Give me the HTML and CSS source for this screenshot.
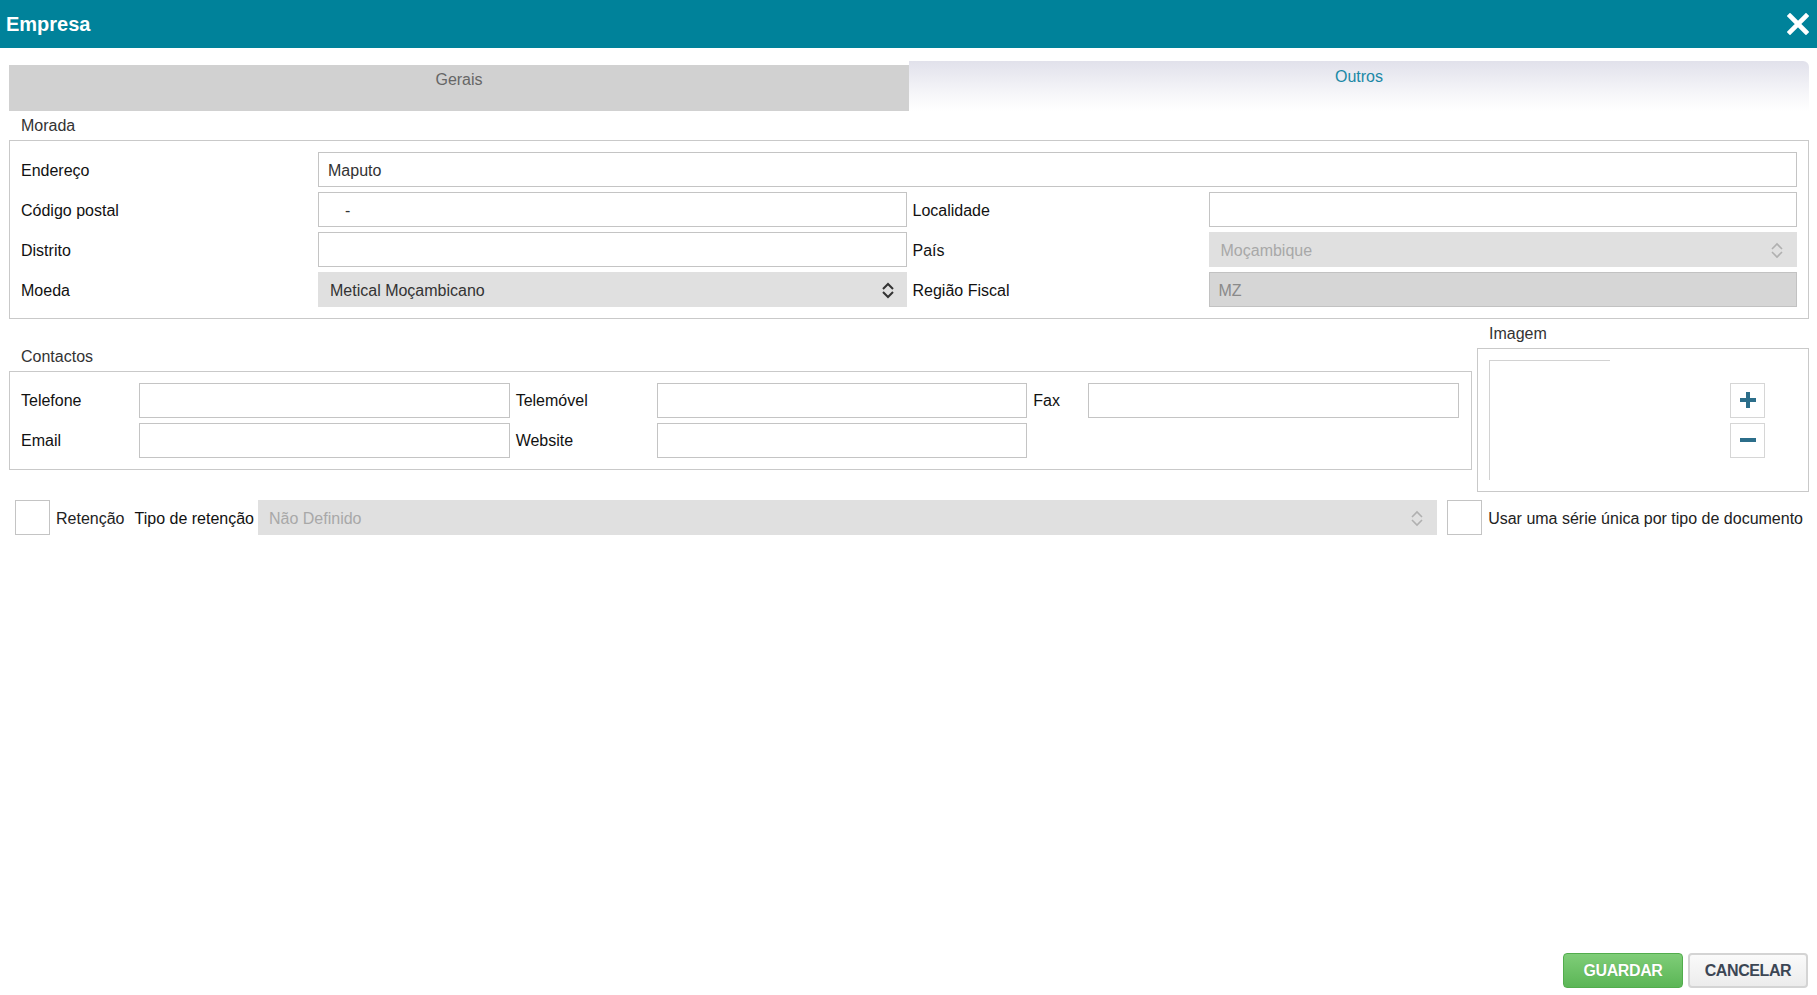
FILE: index.html
```html
<!DOCTYPE html>
<html lang="pt">
<head>
  <meta charset="UTF-8">
  <title>Empresa</title>
  <link rel="stylesheet" href="styles.css">
</head>
<body>
  <div class="dialog">
    <header class="titlebar">
      <h1>Empresa</h1>
      <button class="close" title="Fechar">
        <svg width="22" height="22" viewBox="0 0 22 22"><path d="M3 3 L19 19 M19 3 L3 19" stroke="#fff" stroke-width="4.6" stroke-linecap="square"/></svg>
      </button>
    </header>

    <div class="content">
      <nav class="tabs">
        <div class="tab">Gerais</div>
        <div class="tab active">Outros</div>
      </nav>

      <section class="group">
        <div class="group-title">Morada</div>
        <div class="box morada">
          <label>Endereço</label>
          <input class="wide" type="text" value="Maputo">

          <label>Código postal</label>
          <input class="postal" type="text" value="-">
          <label class="second">Localidade</label>
          <input type="text">

          <label>Distrito</label>
          <input type="text">
          <label class="second">País</label>
          <div class="select disabled">
            <span>Moçambique</span>
            <svg width="12" height="17" viewBox="0 0 12 17"><path d="M1 7 L6 2 L11 7 M1 10 L6 15 L11 10" fill="none" stroke="#b0b0b0" stroke-width="1.6"/></svg>
          </div>

          <label>Moeda</label>
          <div class="select">
            <span>Metical Moçambicano</span>
            <svg width="12" height="17" viewBox="0 0 12 17"><path d="M1 7 L6 2 L11 7 M1 10 L6 15 L11 10" fill="none" stroke="#333" stroke-width="2"/></svg>
          </div>
          <label class="second">Região Fiscal</label>
          <input class="readonly" type="text" value="MZ" readonly>
        </div>
      </section>

      <div class="split">
        <section class="group contactos">
          <div class="group-title">Contactos</div>
          <div class="box contact-grid">
            <label>Telefone</label>
            <input type="text">
            <label class="second">Telemóvel</label>
            <input type="text">
            <label class="second">Fax</label>
            <input type="text">

            <label>Email</label>
            <input type="text">
            <label class="second">Website</label>
            <input type="text">
          </div>
        </section>

        <section class="group imagem">
          <div class="group-title">Imagem</div>
          <div class="box image-box">
            <div class="preview"></div>
            <div class="image-actions">
              <button class="icon-btn" title="Adicionar">
                <svg width="18" height="18" viewBox="0 0 18 18"><path d="M9 1 V17 M1 9 H17" stroke="#2c6e8a" stroke-width="4"/></svg>
              </button>
              <button class="icon-btn" title="Remover">
                <svg width="18" height="18" viewBox="0 0 18 18"><path d="M1 9 H17" stroke="#2c6e8a" stroke-width="4"/></svg>
              </button>
            </div>
          </div>
        </section>
      </div>

      <div class="options">
        <span class="checkbox"></span>
        <span class="opt-label">Retenção</span>
        <span class="opt-label type">Tipo de retenção</span>
        <div class="select disabled grow">
          <span>Não Definido</span>
          <svg width="12" height="17" viewBox="0 0 12 17"><path d="M1 7 L6 2 L11 7 M1 10 L6 15 L11 10" fill="none" stroke="#b0b0b0" stroke-width="1.6"/></svg>
        </div>
        <span class="checkbox gap"></span>
        <span class="opt-label">Usar uma série única por tipo de documento</span>
      </div>
    </div>

    <footer class="footer">
      <button class="btn btn-save">GUARDAR</button>
      <button class="btn btn-cancel">CANCELAR</button>
    </footer>
  </div>
</body>
</html>
```

FILE: styles.css
```css
html, body {
  margin: 0;
  padding: 0;
  height: 100%;
  background: #fff;
  font-family: "Liberation Sans", Arial, sans-serif;
  font-size: 16px;
  color: #222;
}

.dialog {
  height: 100vh;
  display: flex;
  flex-direction: column;
}

.titlebar {
  height: 48px;
  background-color: #00829a;
  display: flex;
  align-items: center;
  justify-content: space-between;
  padding: 0 8px 0 6px;
  flex-shrink: 0;
}

.titlebar h1 {
  margin: 0;
  color: #fff;
  font-size: 20px;
  font-weight: bold;
}

.close {
  background: none;
  border: 0;
  padding: 0;
  width: 22px;
  height: 22px;
  cursor: pointer;
  display: flex;
}

.content {
  flex: 1;
  padding: 0 8px 0 9px;
}

/* tabs */
.tabs {
  display: flex;
  margin-top: 13px;
  height: 50px;
  align-items: flex-end;
}

.tab {
  flex: 1;
  text-align: center;
  box-sizing: border-box;
  line-height: 18px;
}

.tab:first-child {
  height: 46px;
  padding-top: 6px;
  background-color: #d1d1d1;
  color: #666;
}

.tab.active {
  height: 50px;
  padding-top: 7px;
  color: #1a88a6;
  background: linear-gradient(to bottom, #e1e1eb 0%, #f3f3f7 55%, #fff 100%);
  border-top-right-radius: 6px;
}

/* groups */
.group-title {
  height: 29px;
  line-height: 29px;
  padding-left: 12px;
  color: #333;
}

.box {
  border: 1px solid #c9c9c9;
}

label {
  color: #111;
  align-self: center;
  padding-top: 2px;
}

label.second {
  padding-left: 6px;
}

input[type="text"] {
  height: 35px;
  box-sizing: border-box;
  border: 1px solid #c4c4c4;
  padding: 2px 9px 0;
  font-family: inherit;
  font-size: 16px;
  color: #333;
  background: #fff;
  outline: none;
  margin: 0;
  width: 100%;
}

input.postal {
  padding-left: 26px;
}

input.readonly {
  background-color: #d6d6d6;
  border-color: #c2c2c2;
  color: #8a8a8a;
}

.select {
  height: 35px;
  box-sizing: border-box;
  background-color: #e0e0e0;
  display: flex;
  align-items: center;
  justify-content: space-between;
  padding: 2px 13px 0 12px;
  color: #333;
}

.select.disabled {
  color: #a8a8a8;
  padding-right: 14px;
}

.morada {
  display: grid;
  grid-template-columns: 297px 1fr 302px 1fr;
  row-gap: 5px;
  padding: 11px 11px;
}

.morada .wide {
  grid-column: 2 / 5;
}

.split {
  display: flex;
  align-items: center;
  gap: 5px;
}

.contactos {
  flex: 1;
}

.contact-grid {
  display: grid;
  grid-template-columns: 118px 1fr 147px 1fr 61px 1fr;
  row-gap: 5px;
  padding: 11px 12px 11px 11px;
}

.imagem {
  width: 332px;
}

.image-box {
  display: flex;
  align-items: center;
  padding: 11px;
}

.preview {
  width: 120px;
  height: 119px;
  border-top: 1px solid #d2d2d2;
  border-left: 1px solid #d2d2d2;
}

.image-actions {
  margin-left: auto;
  margin-right: 32px;
  display: flex;
  flex-direction: column;
  gap: 5px;
}

.icon-btn {
  width: 35px;
  height: 35px;
  box-sizing: border-box;
  border: 1px solid #d6d6d6;
  background: #fff;
  padding: 0;
  display: flex;
  align-items: center;
  justify-content: center;
}

/* options row */
.options {
  display: flex;
  align-items: center;
  margin-top: 8px;
  padding: 0 6px 0 6px;
}

.checkbox {
  width: 35px;
  height: 35px;
  box-sizing: border-box;
  border: 1px solid #c4c4c4;
  flex-shrink: 0;
}

.checkbox.gap {
  margin-left: 10px;
}

.opt-label {
  margin-left: 6px;
  padding-top: 2px;
  color: #222;
  white-space: nowrap;
}

.opt-label.type {
  margin-left: 10px;
  color: #111;
}

.select.grow {
  flex: 1;
  margin-left: 4px;
  padding-left: 11px;
  padding-right: 14px;
}

/* footer */
.footer {
  display: flex;
  justify-content: flex-end;
  gap: 5px;
  padding: 0 9px 7px 0;
}

.btn {
  width: 120px;
  height: 35px;
  font-family: inherit;
  font-size: 16px;
  font-weight: bold;
  border-radius: 4px;
  cursor: pointer;
  letter-spacing: -0.4px;
}

.btn-save {
  color: #fff;
  background: linear-gradient(to bottom, #7fcd78 0%, #5bb656 100%);
  border: 1px solid #52ad4d;
  text-shadow: 0 0 1px rgba(0, 0, 0, 0.2);
}

.btn-cancel {
  color: #3c4654;
  background: linear-gradient(to bottom, #fafafa 0%, #ececec 100%);
  border: 2px solid #d4d4d4;
}
```
